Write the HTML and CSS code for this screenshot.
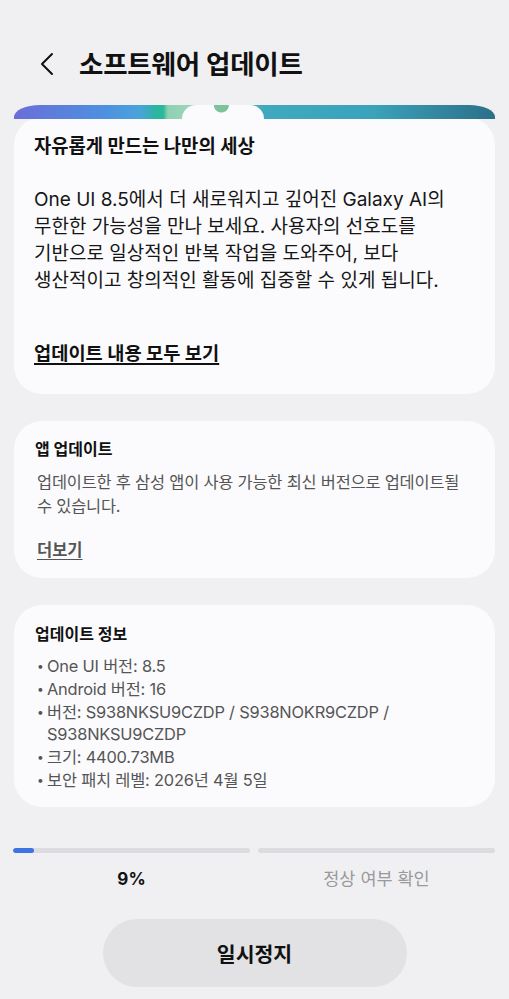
FILE: index.html
```html
<!DOCTYPE html>
<html lang="ko">

<head>
  <meta charset="UTF-8">
  <meta name="viewport" content="width=device-width, initial-scale=1.0">
  <title>소프트웨어 업데이트</title>
  <link rel="stylesheet" href="styles.css">
</head>

<body>
  <div class="page">
    <div class="header">
      <svg class="back" width="16" height="24" viewBox="0 0 16 24">
        <polyline points="13,2 3,12 13,22" fill="none" stroke="#111" stroke-width="2" stroke-linecap="round" stroke-linejoin="round" />
      </svg>
      <h1>소프트웨어 업데이트</h1>
    </div>

    <div class="promo">
      <div class="banner"><span class="blob"></span></div>
      <div class="card card-main">
        <h2>자유롭게 만드는 나만의 세상</h2>
        <p class="lead">One UI 8.5에서 더 새로워지고 깊어진 Galaxy AI의 무한한 가능성을 만나 보세요. 사용자의 선호도를 기반으로 일상적인 반복 작업을 도와주어, 보다 생산적이고 창의적인 활동에 집중할 수 있게 됩니다.</p>
        <a class="more more-main">업데이트 내용 모두 보기</a>
      </div>
    </div>

    <div class="card">
      <h3>앱 업데이트</h3>
      <p class="desc">업데이트한 후 삼성 앱이 사용 가능한 최신 버전으로 업데이트될 수 있습니다.</p>
      <a class="more">더보기</a>
    </div>

    <div class="card card-info">
      <h3>업데이트 정보</h3>
      <ul class="info">
        <li>One UI 버전: 8.5</li>
        <li>Android 버전: 16</li>
        <li>버전: S938NKSU9CZDP / S938NOKR9CZDP / S938NKSU9CZDP</li>
        <li>크기: 4400.73MB</li>
        <li>보안 패치 레벨: 2026년 4월 5일</li>
      </ul>
    </div>

    <div class="progress">
      <div class="track"><div class="fill" style="width: 9%"></div></div>
      <div class="track"></div>
      <div class="step step-on">9%</div>
      <div class="step">정상 여부 확인</div>
    </div>

    <div class="actions">
      <button class="pause">일시정지</button>
    </div>
  </div>
</body>

</html>
```

FILE: styles.css
```css
* {
  margin: 0;
  padding: 0;
  box-sizing: border-box;
}

body {
  background-color: #f0f0f2;
  color: #111;
  font-family: "Inter", "Noto Sans CJK KR", sans-serif;
  word-break: keep-all;
}

li {
  list-style: none;
}

.page {
  width: 509px;
  height: 999px;
  overflow: hidden;
}

.header {
  display: flex;
  align-items: center;
  height: 36px;
  margin: 46px 0 0 39px;
}

.header .back {
  display: block;
  margin-right: 24px;
}

.header h1 {
  font-size: 26.5px;
  font-weight: 700;
  line-height: 36px;
  letter-spacing: -0.2px;
}

.promo {
  margin: 23px 14px 0;
}

.banner {
  position: relative;
  height: 14px;
  border-radius: 26px 26px 0 0 / 12px 12px 0 0;
  background: linear-gradient(90deg, #6a6fd8 0%, #4f8ee0 18%, #4aa3dc 26%, #2ab79a 30%, #2ab79a 31%, #8fd0b4 32%, #9bd4b9 36%, #40a9c0 52%, #3aa2ba 75%, #2b6f88 100%);
}

.banner .blob {
  position: absolute;
  left: 168px;
  top: 0;
  width: 82px;
  height: 14px;
  border-radius: 16px 16px 0 0;
  background: radial-gradient(circle at 48% 0, #7cc29a 0 7px, #fbfbfd 8px);
}

.card {
  margin: 27px 14px 0;
  padding: 16px 20px 16px 21px;
  border-radius: 28px;
  background-color: #fbfbfd;
}

.card-main {
  margin: -2px 0 0;
  padding: 17px 20px 27px 20px;
}

.card-main h2 {
  font-size: 18.8px;
  font-weight: 700;
  line-height: 26px;
}

.lead {
  margin-top: 26px;
  font-size: 19px;
  line-height: 27px;
  color: #161616;
}

.more {
  display: inline-block;
  margin-top: 20px;
  padding-left: 2px;
  font-size: 16.5px;
  font-weight: 700;
  line-height: 24px;
  color: #555;
  text-decoration: underline;
  text-underline-offset: 3px;
}

.more-main {
  margin-top: 47px;
  padding-left: 0;
  font-size: 18.7px;
  line-height: 26px;
  color: #111;
  text-decoration-thickness: 2px;
}

.card h3 {
  font-size: 16px;
  font-weight: 700;
  line-height: 24px;
}

.desc {
  margin-top: 9px;
  padding-left: 2px;
  font-size: 16.4px;
  line-height: 24px;
  letter-spacing: -0.2px;
  color: #555;
}

.card-info {
  padding: 17px 20px 15px 21px;
}

.info {
  margin-top: 9px;
  font-size: 16.4px;
  line-height: 22.8px;
  letter-spacing: -0.2px;
  color: #555;
}

.info li {
  position: relative;
  padding-left: 12px;
}

.info li::before {
  content: "•";
  position: absolute;
  left: 2px;
  top: 0;
  font-size: 12px;
}

.progress {
  display: grid;
  grid-template-columns: 1fr 1fr;
  column-gap: 8px;
  margin: 41px 14px 0 13px;
}

.track {
  height: 5px;
  border-radius: 3px;
  background-color: #dcdce0;
  overflow: hidden;
}

.fill {
  height: 100%;
  border-radius: 3px;
  background-color: #3f73e2;
}

.step {
  margin-top: 14px;
  text-align: center;
  font-size: 17.5px;
  line-height: 24px;
  color: #9a9a9c;
}

.step-on {
  font-size: 17px;
  font-weight: 700;
  color: #111;
}

.actions {
  display: flex;
  justify-content: center;
  margin-top: 28px;
}

.pause {
  width: 304px;
  height: 68px;
  border: 0;
  border-radius: 34px;
  background-color: #e2e2e5;
  color: #111;
  font-family: "Noto Sans CJK KR", sans-serif;
  font-size: 20.5px;
  font-weight: 700;
}
```
